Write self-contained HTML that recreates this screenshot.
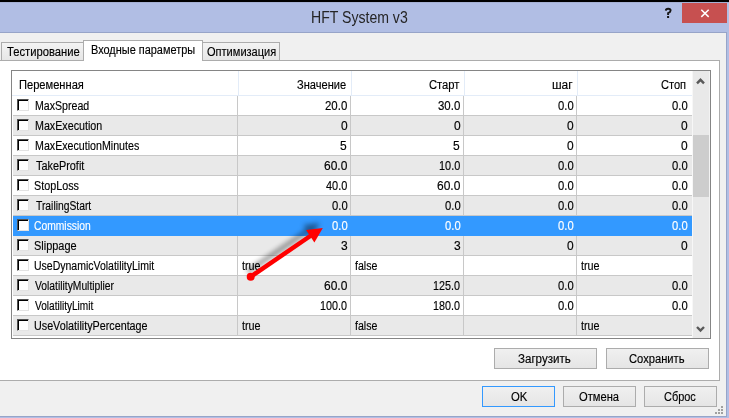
<!DOCTYPE html><html><head><meta charset="utf-8"><style>
html,body{margin:0;padding:0;width:729px;height:418px;overflow:hidden;position:relative;font-family:'Liberation Sans',sans-serif;}
div{position:absolute;font-family:'Liberation Sans',sans-serif;}
</style></head><body>
<div style="left:0px;top:0px;width:729px;height:418px;background:#b1bee4"></div><div style="left:0px;top:0px;width:729px;height:2px;background:#000"></div><div style="left:0px;top:32px;width:727px;height:385px;background:#97a4c8"></div><div style="left:0px;top:33px;width:726px;height:383px;background:#f0f0f0"></div><div style="left:0px;top:2px;width:729px;height:1px;background:#a6b1d4"></div><div style="left:682px;top:3px;width:45px;height:20px;background:#c75050"></div><svg style="position:absolute;left:0;top:0" width="729" height="40"><path d="M701.3 9.8 L708.7 16.9 M708.7 9.8 L701.3 16.9" stroke="#fff" stroke-width="1.5"/><path d="M665.8 10.6 Q665.9 8.7 668.2 8.7 Q670.6 8.7 670.6 10.4 Q670.6 11.9 668.1 13.2 L668.1 15" fill="none" stroke="#151515" stroke-width="1.9"/><rect x="667.1" y="16" width="2" height="2" fill="#151515"/></svg><div style="left:0px;top:60px;width:720px;height:321px;background:#fff;border:1px solid #acacac;border-left:none;box-sizing:border-box"></div><div style="left:1px;top:42px;width:83px;height:19px;background:linear-gradient(#f3f3f3,#e6e6e6);border:1px solid #acacac;box-sizing:border-box"></div><div style="left:202px;top:42px;width:78px;height:19px;background:linear-gradient(#f3f3f3,#e6e6e6);border:1px solid #acacac;box-sizing:border-box"></div><div style="left:83px;top:40px;width:120px;height:21px;background:#fff;border:1px solid #acacac;border-bottom:none;box-sizing:border-box"></div><div style="left:11px;top:70px;width:700px;height:269px;background:#fff;border:1px solid #858585;box-sizing:border-box"></div><div style="left:238px;top:71px;width:1px;height:25px;background:#e3ecf8"></div><div style="left:351px;top:71px;width:1px;height:25px;background:#e3ecf8"></div><div style="left:464px;top:71px;width:1px;height:25px;background:#e3ecf8"></div><div style="left:577px;top:71px;width:1px;height:25px;background:#e3ecf8"></div><div style="left:692px;top:71px;width:1px;height:25px;background:#e3ecf8"></div><div style="left:12px;top:95px;width:680px;height:1px;background:#e3ecf8"></div><div style="left:13px;top:115px;width:679px;height:21px;background:#e9e9e9;border-top:1px solid #c8c8c8;border-bottom:1px solid #c8c8c8;box-sizing:border-box"></div><div style="left:13px;top:155px;width:679px;height:21px;background:#e9e9e9;border-top:1px solid #c8c8c8;border-bottom:1px solid #c8c8c8;box-sizing:border-box"></div><div style="left:13px;top:195px;width:679px;height:21px;background:#e9e9e9;border-top:1px solid #c8c8c8;border-bottom:1px solid #c8c8c8;box-sizing:border-box"></div><div style="left:13px;top:216px;width:679px;height:20px;background:#3399ff"></div><div style="left:13px;top:235px;width:679px;height:21px;background:#e9e9e9;border-top:1px solid #c8c8c8;border-bottom:1px solid #c8c8c8;box-sizing:border-box"></div><div style="left:13px;top:275px;width:679px;height:21px;background:#e9e9e9;border-top:1px solid #c8c8c8;border-bottom:1px solid #c8c8c8;box-sizing:border-box"></div><div style="left:13px;top:315px;width:679px;height:21px;background:#e9e9e9;border-top:1px solid #c8c8c8;border-bottom:1px solid #c8c8c8;box-sizing:border-box"></div><div style="left:237px;top:96px;width:1px;height:240px;background:#c8c8c8"></div><div style="left:350px;top:96px;width:1px;height:240px;background:#c8c8c8"></div><div style="left:463px;top:96px;width:1px;height:240px;background:#c8c8c8"></div><div style="left:576px;top:96px;width:1px;height:240px;background:#c8c8c8"></div><div style="left:13px;top:216px;width:679px;height:20px;background:#3399ff"></div><div style="left:17px;top:99px;width:12px;height:12px;background:#fff;border-top:1px solid #505050;border-left:1px solid #505050;border-right:1px solid #e3e3e3;border-bottom:1px solid #e3e3e3;box-sizing:border-box;box-shadow:inset 1px 1px 0 #000"></div><div style="left:17px;top:119px;width:12px;height:12px;background:#fff;border-top:1px solid #505050;border-left:1px solid #505050;border-right:1px solid #e3e3e3;border-bottom:1px solid #e3e3e3;box-sizing:border-box;box-shadow:inset 1px 1px 0 #000"></div><div style="left:17px;top:139px;width:12px;height:12px;background:#fff;border-top:1px solid #505050;border-left:1px solid #505050;border-right:1px solid #e3e3e3;border-bottom:1px solid #e3e3e3;box-sizing:border-box;box-shadow:inset 1px 1px 0 #000"></div><div style="left:17px;top:159px;width:12px;height:12px;background:#fff;border-top:1px solid #505050;border-left:1px solid #505050;border-right:1px solid #e3e3e3;border-bottom:1px solid #e3e3e3;box-sizing:border-box;box-shadow:inset 1px 1px 0 #000"></div><div style="left:17px;top:179px;width:12px;height:12px;background:#fff;border-top:1px solid #505050;border-left:1px solid #505050;border-right:1px solid #e3e3e3;border-bottom:1px solid #e3e3e3;box-sizing:border-box;box-shadow:inset 1px 1px 0 #000"></div><div style="left:17px;top:199px;width:12px;height:12px;background:#fff;border-top:1px solid #505050;border-left:1px solid #505050;border-right:1px solid #e3e3e3;border-bottom:1px solid #e3e3e3;box-sizing:border-box;box-shadow:inset 1px 1px 0 #000"></div><div style="left:17px;top:219px;width:12px;height:12px;background:#fff;border-top:1px solid #505050;border-left:1px solid #505050;border-right:1px solid #e3e3e3;border-bottom:1px solid #e3e3e3;box-sizing:border-box;box-shadow:inset 1px 1px 0 #000"></div><div style="left:17px;top:239px;width:12px;height:12px;background:#fff;border-top:1px solid #505050;border-left:1px solid #505050;border-right:1px solid #e3e3e3;border-bottom:1px solid #e3e3e3;box-sizing:border-box;box-shadow:inset 1px 1px 0 #000"></div><div style="left:17px;top:259px;width:12px;height:12px;background:#fff;border-top:1px solid #505050;border-left:1px solid #505050;border-right:1px solid #e3e3e3;border-bottom:1px solid #e3e3e3;box-sizing:border-box;box-shadow:inset 1px 1px 0 #000"></div><div style="left:17px;top:279px;width:12px;height:12px;background:#fff;border-top:1px solid #505050;border-left:1px solid #505050;border-right:1px solid #e3e3e3;border-bottom:1px solid #e3e3e3;box-sizing:border-box;box-shadow:inset 1px 1px 0 #000"></div><div style="left:17px;top:299px;width:12px;height:12px;background:#fff;border-top:1px solid #505050;border-left:1px solid #505050;border-right:1px solid #e3e3e3;border-bottom:1px solid #e3e3e3;box-sizing:border-box;box-shadow:inset 1px 1px 0 #000"></div><div style="left:17px;top:319px;width:12px;height:12px;background:#fff;border-top:1px solid #505050;border-left:1px solid #505050;border-right:1px solid #e3e3e3;border-bottom:1px solid #e3e3e3;box-sizing:border-box;box-shadow:inset 1px 1px 0 #000"></div><div style="left:692px;top:71px;width:18px;height:267px;background:#e9e9e9;border-left:1px solid #f7f7f7;border-right:1px solid #f3f3f3;box-sizing:border-box"></div><div style="left:693px;top:135px;width:16px;height:62px;background:#cdcdcd"></div><svg style="position:absolute;left:0;top:0" width="729" height="418"><path d="M697 83.3 L700.5 79.8 L704 83.3" fill="none" stroke="#5a5a5a" stroke-width="2.4"/><path d="M697 327 L700.5 330.5 L704 327" fill="none" stroke="#5a5a5a" stroke-width="2.4"/></svg><div style="left:494px;top:348px;width:103px;height:21px;background:linear-gradient(#f0f0f0,#e5e5e5);border:1px solid #acacac;box-sizing:border-box"></div><div style="left:606px;top:348px;width:103px;height:21px;background:linear-gradient(#f0f0f0,#e5e5e5);border:1px solid #acacac;box-sizing:border-box"></div><div style="left:482px;top:386px;width:73px;height:21px;background:linear-gradient(#f0f0f0,#e5e5e5);border:1px solid #3399ff;box-sizing:border-box"></div><div style="left:563px;top:386px;width:73px;height:21px;background:linear-gradient(#f0f0f0,#e5e5e5);border:1px solid #acacac;box-sizing:border-box"></div><div style="left:644px;top:386px;width:73px;height:21px;background:linear-gradient(#f0f0f0,#e5e5e5);border:1px solid #acacac;box-sizing:border-box"></div><div style="left:721px;top:406px;width:2px;height:2px;background:#a0a0a0"></div><div style="left:718px;top:409px;width:2px;height:2px;background:#a0a0a0"></div><div style="left:721px;top:409px;width:2px;height:2px;background:#a0a0a0"></div><div style="left:715px;top:412px;width:2px;height:2px;background:#a0a0a0"></div><div style="left:718px;top:412px;width:2px;height:2px;background:#a0a0a0"></div><div style="left:721px;top:412px;width:2px;height:2px;background:#a0a0a0"></div><div style="left:311.12px;top:5px;height:26px;line-height:26px;white-space:nowrap;font-size:16px;color:#252525;transform:scaleX(0.8796);transform-origin:0 0;">HFT System v3</div><div style="left:7.00px;top:39px;height:26px;line-height:26px;white-space:nowrap;font-size:12px;color:#000;-webkit-text-stroke:0.15px #000;transform:scaleX(0.9351);transform-origin:0 0;">Тестирование</div><div style="left:91.09px;top:37px;height:26px;line-height:26px;white-space:nowrap;font-size:12px;color:#000;-webkit-text-stroke:0.15px #000;transform:scaleX(0.9115);transform-origin:0 0;">Входные параметры</div><div style="left:207.00px;top:39px;height:26px;line-height:26px;white-space:nowrap;font-size:12px;color:#000;-webkit-text-stroke:0.15px #000;transform:scaleX(0.9200);transform-origin:0 0;">Оптимизация</div><div style="left:19.07px;top:72px;height:26px;line-height:26px;white-space:nowrap;font-size:12px;color:#000;-webkit-text-stroke:0.15px #000;transform:scaleX(0.9265);transform-origin:0 0;">Переменная</div><div style="left:297.08px;top:72px;height:26px;line-height:26px;white-space:nowrap;font-size:12px;color:#000;-webkit-text-stroke:0.15px #000;transform:scaleX(0.9231);transform-origin:0 0;">Значение</div><div style="left:429.06px;top:72px;height:26px;line-height:26px;white-space:nowrap;font-size:12px;color:#000;-webkit-text-stroke:0.15px #000;transform:scaleX(0.9355);transform-origin:0 0;">Старт</div><div style="left:552.00px;top:72px;height:26px;line-height:26px;white-space:nowrap;font-size:12px;color:#000;-webkit-text-stroke:0.15px #000;transform:scaleX(0.9990);transform-origin:0 0;">шаг</div><div style="left:661.08px;top:72px;height:26px;line-height:26px;white-space:nowrap;font-size:12px;color:#000;-webkit-text-stroke:0.15px #000;transform:scaleX(0.9231);transform-origin:0 0;">Стоп</div><div style="left:35.12px;top:93px;height:26px;line-height:26px;white-space:nowrap;font-size:12px;color:#000;-webkit-text-stroke:0.15px #000;transform:scaleX(0.8833);transform-origin:0 0;">MaxSpread</div><div style="left:35.11px;top:113px;height:26px;line-height:26px;white-space:nowrap;font-size:12px;color:#000;-webkit-text-stroke:0.15px #000;transform:scaleX(0.8919);transform-origin:0 0;">MaxExecution</div><div style="left:35.11px;top:133px;height:26px;line-height:26px;white-space:nowrap;font-size:12px;color:#000;-webkit-text-stroke:0.15px #000;transform:scaleX(0.8879);transform-origin:0 0;">MaxExecutionMinutes</div><div style="left:36.00px;top:153px;height:26px;line-height:26px;white-space:nowrap;font-size:12px;color:#000;-webkit-text-stroke:0.15px #000;transform:scaleX(0.9057);transform-origin:0 0;">TakeProfit</div><div style="left:34.10px;top:173px;height:26px;line-height:26px;white-space:nowrap;font-size:12px;color:#000;-webkit-text-stroke:0.15px #000;transform:scaleX(0.8980);transform-origin:0 0;">StopLoss</div><div style="left:36.00px;top:193px;height:26px;line-height:26px;white-space:nowrap;font-size:12px;color:#000;-webkit-text-stroke:0.15px #000;transform:scaleX(0.8594);transform-origin:0 0;">TrailingStart</div><div style="left:34.14px;top:213px;height:26px;line-height:26px;white-space:nowrap;font-size:12px;color:#fff;-webkit-text-stroke:0.15px #fff;transform:scaleX(0.8594);transform-origin:0 0;">Commission</div><div style="left:34.09px;top:233px;height:26px;line-height:26px;white-space:nowrap;font-size:12px;color:#000;-webkit-text-stroke:0.15px #000;transform:scaleX(0.9111);transform-origin:0 0;">Slippage</div><div style="left:34.12px;top:253px;height:26px;line-height:26px;white-space:nowrap;font-size:12px;color:#000;-webkit-text-stroke:0.15px #000;transform:scaleX(0.8750);transform-origin:0 0;">UseDynamicVolatilityLimit</div><div style="left:35.00px;top:273px;height:26px;line-height:26px;white-space:nowrap;font-size:12px;color:#000;-webkit-text-stroke:0.15px #000;transform:scaleX(0.8587);transform-origin:0 0;">VolatilityMultiplier</div><div style="left:35.00px;top:293px;height:26px;line-height:26px;white-space:nowrap;font-size:12px;color:#000;-webkit-text-stroke:0.15px #000;transform:scaleX(0.8406);transform-origin:0 0;">VolatilityLimit</div><div style="left:34.10px;top:313px;height:26px;line-height:26px;white-space:nowrap;font-size:12px;color:#000;-webkit-text-stroke:0.15px #000;transform:scaleX(0.8960);transform-origin:0 0;">UseVolatilityPercentage</div><div style="left:518.04px;top:346px;height:26px;line-height:26px;white-space:nowrap;font-size:12px;color:#000;-webkit-text-stroke:0.15px #000;transform:scaleX(0.9623);transform-origin:0 0;">Загрузить</div><div style="left:629.07px;top:346px;height:26px;line-height:26px;white-space:nowrap;font-size:12px;color:#000;-webkit-text-stroke:0.15px #000;transform:scaleX(0.9310);transform-origin:0 0;">Сохранить</div><div style="left:511.00px;top:384px;height:26px;line-height:26px;white-space:nowrap;font-size:12px;color:#000;-webkit-text-stroke:0.15px #000;transform:scaleX(0.9412);transform-origin:0 0;">OK</div><div style="left:579.00px;top:384px;height:26px;line-height:26px;white-space:nowrap;font-size:12px;color:#000;-webkit-text-stroke:0.15px #000;transform:scaleX(0.9302);transform-origin:0 0;">Отмена</div><div style="left:664.09px;top:384px;height:26px;line-height:26px;white-space:nowrap;font-size:12px;color:#000;-webkit-text-stroke:0.15px #000;transform:scaleX(0.9118);transform-origin:0 0;">Сброс</div><div style="left:325.00px;top:93px;height:26px;line-height:26px;white-space:nowrap;font-size:12px;color:#000;-webkit-text-stroke:0.15px #000;transform:scaleX(0.9545);transform-origin:0 0;">20.0</div><div style="left:438.00px;top:93px;height:26px;line-height:26px;white-space:nowrap;font-size:12px;color:#000;-webkit-text-stroke:0.15px #000;transform:scaleX(0.9545);transform-origin:0 0;">30.0</div><div style="left:557.94px;top:93px;height:26px;line-height:26px;white-space:nowrap;font-size:12px;color:#000;-webkit-text-stroke:0.15px #000;transform:scaleX(0.9375);transform-origin:0 0;">0.0</div><div style="left:671.94px;top:93px;height:26px;line-height:26px;white-space:nowrap;font-size:12px;color:#000;-webkit-text-stroke:0.15px #000;transform:scaleX(0.9375);transform-origin:0 0;">0.0</div><div style="left:341.00px;top:113px;height:26px;line-height:26px;white-space:nowrap;font-size:12px;color:#000;-webkit-text-stroke:0.15px #000;transform:scaleX(0.9990);transform-origin:0 0;">0</div><div style="left:454.00px;top:113px;height:26px;line-height:26px;white-space:nowrap;font-size:12px;color:#000;-webkit-text-stroke:0.15px #000;transform:scaleX(0.9990);transform-origin:0 0;">0</div><div style="left:567.00px;top:113px;height:26px;line-height:26px;white-space:nowrap;font-size:12px;color:#000;-webkit-text-stroke:0.15px #000;transform:scaleX(0.9990);transform-origin:0 0;">0</div><div style="left:681.00px;top:113px;height:26px;line-height:26px;white-space:nowrap;font-size:12px;color:#000;-webkit-text-stroke:0.15px #000;transform:scaleX(0.9990);transform-origin:0 0;">0</div><div style="left:340.00px;top:133px;height:26px;line-height:26px;white-space:nowrap;font-size:12px;color:#000;-webkit-text-stroke:0.15px #000;transform:scaleX(0.9990);transform-origin:0 0;">5</div><div style="left:453.00px;top:133px;height:26px;line-height:26px;white-space:nowrap;font-size:12px;color:#000;-webkit-text-stroke:0.15px #000;transform:scaleX(0.9990);transform-origin:0 0;">5</div><div style="left:567.00px;top:133px;height:26px;line-height:26px;white-space:nowrap;font-size:12px;color:#000;-webkit-text-stroke:0.15px #000;transform:scaleX(0.9990);transform-origin:0 0;">0</div><div style="left:681.00px;top:133px;height:26px;line-height:26px;white-space:nowrap;font-size:12px;color:#000;-webkit-text-stroke:0.15px #000;transform:scaleX(0.9990);transform-origin:0 0;">0</div><div style="left:324.00px;top:153px;height:26px;line-height:26px;white-space:nowrap;font-size:12px;color:#000;-webkit-text-stroke:0.15px #000;transform:scaleX(0.9990);transform-origin:0 0;">60.0</div><div style="left:439.00px;top:153px;height:26px;line-height:26px;white-space:nowrap;font-size:12px;color:#000;-webkit-text-stroke:0.15px #000;transform:scaleX(0.9091);transform-origin:0 0;">10.0</div><div style="left:557.94px;top:153px;height:26px;line-height:26px;white-space:nowrap;font-size:12px;color:#000;-webkit-text-stroke:0.15px #000;transform:scaleX(0.9375);transform-origin:0 0;">0.0</div><div style="left:671.94px;top:153px;height:26px;line-height:26px;white-space:nowrap;font-size:12px;color:#000;-webkit-text-stroke:0.15px #000;transform:scaleX(0.9375);transform-origin:0 0;">0.0</div><div style="left:325.91px;top:173px;height:26px;line-height:26px;white-space:nowrap;font-size:12px;color:#000;-webkit-text-stroke:0.15px #000;transform:scaleX(0.9130);transform-origin:0 0;">40.0</div><div style="left:437.00px;top:173px;height:26px;line-height:26px;white-space:nowrap;font-size:12px;color:#000;-webkit-text-stroke:0.15px #000;transform:scaleX(0.9990);transform-origin:0 0;">60.0</div><div style="left:557.94px;top:173px;height:26px;line-height:26px;white-space:nowrap;font-size:12px;color:#000;-webkit-text-stroke:0.15px #000;transform:scaleX(0.9375);transform-origin:0 0;">0.0</div><div style="left:671.94px;top:173px;height:26px;line-height:26px;white-space:nowrap;font-size:12px;color:#000;-webkit-text-stroke:0.15px #000;transform:scaleX(0.9375);transform-origin:0 0;">0.0</div><div style="left:331.94px;top:193px;height:26px;line-height:26px;white-space:nowrap;font-size:12px;color:#000;-webkit-text-stroke:0.15px #000;transform:scaleX(0.9375);transform-origin:0 0;">0.0</div><div style="left:444.94px;top:193px;height:26px;line-height:26px;white-space:nowrap;font-size:12px;color:#000;-webkit-text-stroke:0.15px #000;transform:scaleX(0.9375);transform-origin:0 0;">0.0</div><div style="left:557.94px;top:193px;height:26px;line-height:26px;white-space:nowrap;font-size:12px;color:#000;-webkit-text-stroke:0.15px #000;transform:scaleX(0.9375);transform-origin:0 0;">0.0</div><div style="left:671.94px;top:193px;height:26px;line-height:26px;white-space:nowrap;font-size:12px;color:#000;-webkit-text-stroke:0.15px #000;transform:scaleX(0.9375);transform-origin:0 0;">0.0</div><div style="left:331.94px;top:213px;height:26px;line-height:26px;white-space:nowrap;font-size:12px;color:#fff;-webkit-text-stroke:0.15px #fff;transform:scaleX(0.9375);transform-origin:0 0;">0.0</div><div style="left:444.94px;top:213px;height:26px;line-height:26px;white-space:nowrap;font-size:12px;color:#fff;-webkit-text-stroke:0.15px #fff;transform:scaleX(0.9375);transform-origin:0 0;">0.0</div><div style="left:557.94px;top:213px;height:26px;line-height:26px;white-space:nowrap;font-size:12px;color:#fff;-webkit-text-stroke:0.15px #fff;transform:scaleX(0.9375);transform-origin:0 0;">0.0</div><div style="left:671.94px;top:213px;height:26px;line-height:26px;white-space:nowrap;font-size:12px;color:#fff;-webkit-text-stroke:0.15px #fff;transform:scaleX(0.9375);transform-origin:0 0;">0.0</div><div style="left:341.00px;top:233px;height:26px;line-height:26px;white-space:nowrap;font-size:12px;color:#000;-webkit-text-stroke:0.15px #000;transform:scaleX(0.9990);transform-origin:0 0;">3</div><div style="left:454.00px;top:233px;height:26px;line-height:26px;white-space:nowrap;font-size:12px;color:#000;-webkit-text-stroke:0.15px #000;transform:scaleX(0.9990);transform-origin:0 0;">3</div><div style="left:567.00px;top:233px;height:26px;line-height:26px;white-space:nowrap;font-size:12px;color:#000;-webkit-text-stroke:0.15px #000;transform:scaleX(0.9990);transform-origin:0 0;">0</div><div style="left:681.00px;top:233px;height:26px;line-height:26px;white-space:nowrap;font-size:12px;color:#000;-webkit-text-stroke:0.15px #000;transform:scaleX(0.9990);transform-origin:0 0;">0</div><div style="left:242.00px;top:253px;height:26px;line-height:26px;white-space:nowrap;font-size:12px;color:#000;-webkit-text-stroke:0.15px #000;transform:scaleX(0.9000);transform-origin:0 0;">true</div><div style="left:355.00px;top:253px;height:26px;line-height:26px;white-space:nowrap;font-size:12px;color:#000;-webkit-text-stroke:0.15px #000;transform:scaleX(0.8800);transform-origin:0 0;">false</div><div style="left:581.00px;top:253px;height:26px;line-height:26px;white-space:nowrap;font-size:12px;color:#000;-webkit-text-stroke:0.15px #000;transform:scaleX(0.9000);transform-origin:0 0;">true</div><div style="left:324.00px;top:273px;height:26px;line-height:26px;white-space:nowrap;font-size:12px;color:#000;-webkit-text-stroke:0.15px #000;transform:scaleX(0.9990);transform-origin:0 0;">60.0</div><div style="left:433.00px;top:273px;height:26px;line-height:26px;white-space:nowrap;font-size:12px;color:#000;-webkit-text-stroke:0.15px #000;transform:scaleX(0.8966);transform-origin:0 0;">125.0</div><div style="left:557.94px;top:273px;height:26px;line-height:26px;white-space:nowrap;font-size:12px;color:#000;-webkit-text-stroke:0.15px #000;transform:scaleX(0.9375);transform-origin:0 0;">0.0</div><div style="left:671.94px;top:273px;height:26px;line-height:26px;white-space:nowrap;font-size:12px;color:#000;-webkit-text-stroke:0.15px #000;transform:scaleX(0.9375);transform-origin:0 0;">0.0</div><div style="left:320.00px;top:293px;height:26px;line-height:26px;white-space:nowrap;font-size:12px;color:#000;-webkit-text-stroke:0.15px #000;transform:scaleX(0.8966);transform-origin:0 0;">100.0</div><div style="left:433.00px;top:293px;height:26px;line-height:26px;white-space:nowrap;font-size:12px;color:#000;-webkit-text-stroke:0.15px #000;transform:scaleX(0.8966);transform-origin:0 0;">180.0</div><div style="left:557.94px;top:293px;height:26px;line-height:26px;white-space:nowrap;font-size:12px;color:#000;-webkit-text-stroke:0.15px #000;transform:scaleX(0.9375);transform-origin:0 0;">0.0</div><div style="left:671.94px;top:293px;height:26px;line-height:26px;white-space:nowrap;font-size:12px;color:#000;-webkit-text-stroke:0.15px #000;transform:scaleX(0.9375);transform-origin:0 0;">0.0</div><div style="left:242.00px;top:313px;height:26px;line-height:26px;white-space:nowrap;font-size:12px;color:#000;-webkit-text-stroke:0.15px #000;transform:scaleX(0.9000);transform-origin:0 0;">true</div><div style="left:355.00px;top:313px;height:26px;line-height:26px;white-space:nowrap;font-size:12px;color:#000;-webkit-text-stroke:0.15px #000;transform:scaleX(0.8800);transform-origin:0 0;">false</div><div style="left:581.00px;top:313px;height:26px;line-height:26px;white-space:nowrap;font-size:12px;color:#000;-webkit-text-stroke:0.15px #000;transform:scaleX(0.9000);transform-origin:0 0;">true</div><svg style="position:absolute;left:0;top:0" width="729" height="418"><defs><filter id="sh" x="-50%" y="-50%" width="200%" height="200%"><feGaussianBlur stdDeviation="2.5"/></filter></defs><g transform="translate(-3,-5)" filter="url(#sh)" opacity="0.42"><line x1="250.7" y1="276.7" x2="311" y2="235.5" stroke="#000" stroke-width="4.5"/><polygon points="322.8,228 306.1,230.1 314.4,242.6" fill="#000"/></g><line x1="250.7" y1="276.7" x2="311" y2="235.5" stroke="#ff0000" stroke-width="4.5"/><circle cx="250.7" cy="276.7" r="4" fill="#ff0000"/><polygon points="322.8,228 306.1,230.1 314.4,242.6" fill="#ff0000"/></svg>
</body></html>
